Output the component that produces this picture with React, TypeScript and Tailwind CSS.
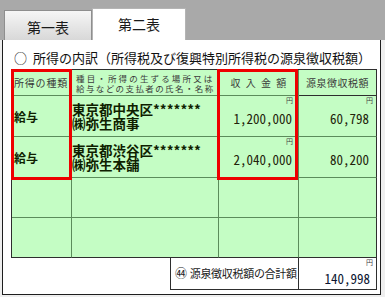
const rows = [
  { kind: '給与', place: '東京都中央区*******', name: '㈱弥生商事', income: '1,200,000', tax: '60,798' },
  { kind: '給与', place: '東京都渋谷区*******', name: '㈱弥生本舗', income: '2,040,000', tax: '80,200' },
];

export default function App() {
  return (
    <div className="w-[385px] h-[297px] overflow-hidden bg-[#eeeeee] font-['Noto_Sans_CJK_JP','Noto_Sans',sans-serif]">
      {/* tab bar */}
      <div className="h-[40px] bg-[#a9a9a9] flex items-end pl-[4px]">
        <div className="w-[88px] h-[30px] border border-b-0 border-[#8e8e8e] bg-gradient-to-b from-[#f6f6f6] to-[#d8d8d8] flex items-center justify-center pt-[4px] text-[14px] text-[#1a1a1a]">
          第一表
        </div>
        <div className="w-[94px] h-[32px] border border-b-0 border-[#b4b4b4] bg-white flex items-center justify-center text-[14px] text-[#1a1a1a]">
          第二表
        </div>
      </div>

      {/* panel */}
      <div className="ml-[2px] w-[379px] h-[255px] bg-white border-x border-b border-[#1e1e1e] pl-[8px]">
        <div className="h-[29px] pt-[11px] pl-[3px] flex items-start text-[13px] leading-[14px] text-[#111]">
          <span className="w-[13px]">○</span>
          <span className="ml-[6px]">所得の内訳（所得税及び復興特別所得税の源泉徴収税額）</span>
        </div>

        <div className="relative w-[366px] grid grid-cols-[60px_147px_80px_78px] grid-rows-[26px_41px_41px_40px_40px] border-l border-t border-[#2e2e2e] bg-[#c4fdc4]">
          {/* header */}
          <div className="border-r border-b border-[#5b8c5b] flex items-center pl-[2px] text-[10px] tracking-[0.8px] text-[#3a3a3a]">
            所得の種類
          </div>
          <div className="border-r border-b border-[#5b8c5b] flex flex-col justify-center pl-[4px] text-[8.5px] leading-[10px] text-[#3a3a3a] whitespace-nowrap">
            <span className="tracking-[2.15px]">種目・所得の生ずる場所又は</span>
            <span className="tracking-[1.4px]">給与などの支払者の氏名・名称</span>
          </div>
          <div className="border-r border-b border-[#5b8c5b] flex items-center justify-center pl-[5px] text-[10px] tracking-[5.2px] text-[#3a3a3a]">
            収入金額
          </div>
          <div className="border-r border-b border-[#2e2e2e] flex items-center justify-center text-[10px] tracking-[0.5px] text-[#3a3a3a]">
            源泉徴収税額
          </div>

          {/* data rows */}
          {rows.map((r, i) => (
            <div key={i} className="contents">
              <div className="border-r border-b border-[#5b8c5b] flex items-center pl-[2px] pt-[2px] text-[12px] font-bold text-[#0f1f00]">
                {r.kind}
              </div>
              <div className="border-r border-b border-[#5b8c5b] flex flex-col justify-center text-[13.5px] leading-[14.5px] font-bold text-[#0f1f00] whitespace-nowrap">
                <span>{r.place}</span>
                <span>{r.name}</span>
              </div>
              <div className="relative border-r border-b border-[#5b8c5b] flex items-center justify-end pr-[6px] pt-[5px] text-[13px] text-[#22220a] [font-feature-settings:'hwid']">
                <span className="absolute top-[0px] right-[5px] text-[7px] leading-[8px] text-[#444]">円</span>
                {r.income}
              </div>
              <div className="relative border-r border-b border-[#2e2e2e] border-b-[#5b8c5b] flex items-center justify-end pr-[7px] pt-[5px] text-[13px] text-[#22220a] [font-feature-settings:'hwid']">
                {i === 0 && <span className="absolute top-[0px] right-[3px] text-[7px] leading-[8px] text-[#444]">円</span>}
                {r.tax}
              </div>
            </div>
          ))}

          {/* empty rows */}
          <div className="border-r border-b border-[#5b8c5b]" />
          <div className="border-r border-b border-[#5b8c5b]" />
          <div className="border-r border-b border-[#5b8c5b]" />
          <div className="border-r border-b border-[#2e2e2e] border-b-[#5b8c5b]" />
          <div className="border-r border-b border-[#5b8c5b] border-b-[#2e2e2e]" />
          <div className="border-r border-b border-[#5b8c5b] border-b-[#2e2e2e]" />
          <div className="border-r border-b border-[#5b8c5b] border-b-[#2e2e2e]" />
          <div className="border-r border-b border-[#2e2e2e]" />

          {/* highlight boxes */}
          <div className="absolute left-[-1px] top-[-1px] w-[61px] h-[111px] border-[3px] border-[#ee0000]" />
          <div className="absolute left-[205px] top-[-1px] w-[81px] h-[111px] border-[3px] border-[#ee0000]" />
        </div>

        {/* total */}
        <div className="ml-[159px] w-[207px] h-[32px] border-x border-b border-[#2e2e2e] flex">
          <div className="w-[128px] border-r border-[#2e2e2e] flex items-center pl-[4px] pb-[1px] text-[11px] text-[#1a1a1a] whitespace-nowrap tracking-[-0.3px]">
            <span className="mr-[3px] text-[12px]">㊹</span>源泉徴収税額の合計額
          </div>
          <div className="relative flex-1 flex items-end justify-end pr-[6px] pb-[3px] text-[13px] leading-[14px] text-[#0a1430] [font-feature-settings:'hwid']">
            <span className="absolute top-[0px] right-[3px] text-[7px] leading-[8px] text-[#444]">円</span>
            140,998
          </div>
        </div>
      </div>
    </div>
  );
}
